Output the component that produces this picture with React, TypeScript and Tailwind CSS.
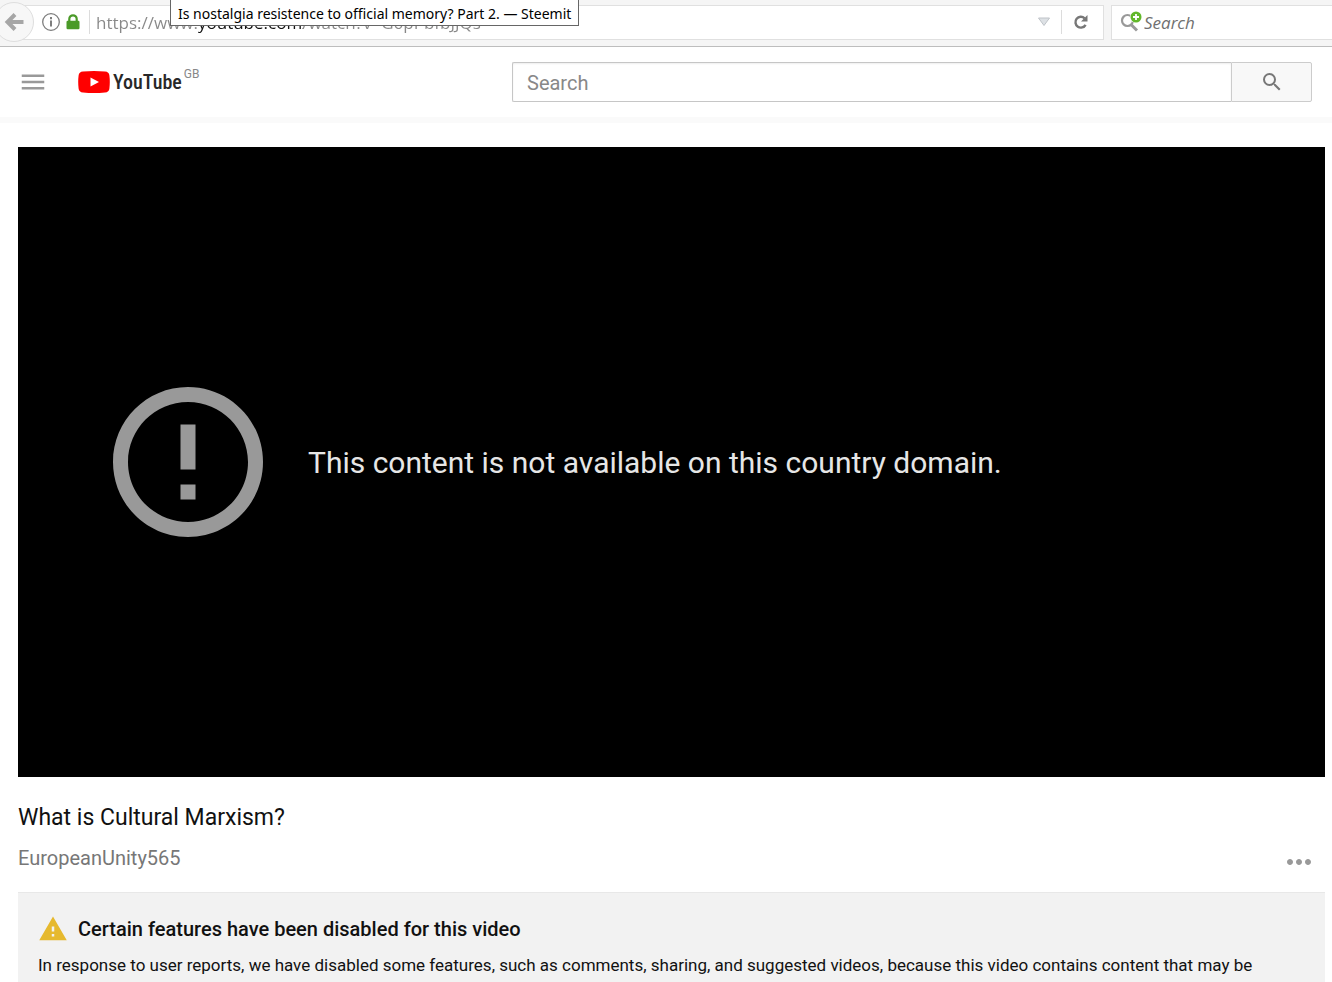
import { MdErrorOutline, MdMenu, MdMoreHoriz, MdSearch, MdWarning } from "react-icons/md";

function BackIcon() {
  return (
    <svg viewBox="0 0 20 20" className="h-5 w-5" fill="none" stroke="#a6a6a6" strokeWidth="4">
      <path d="M19.500 10H4" />
      <path d="M11 2.500 3.500 10l7.500 7.500" />
    </svg>
  );
}

function InfoIcon() {
  return (
    <svg viewBox="0 0 18 18" className="h-[18px] w-[18px]" fill="none" stroke="#7d7d7d">
      <circle cx="9" cy="9" r="8.300" strokeWidth="1.300" />
      <path d="M9 4v2.200M9 7.500V13.500" strokeWidth="2" />
    </svg>
  );
}

function LockIcon() {
  return (
    <svg viewBox="0 0 14 16" className="h-4 w-[14px]">
      <path d="M3.300 8V5a3.700 3.700 0 0 1 7.400 0v3" fill="none" stroke="#4a9a28" strokeWidth="2.200" />
      <rect x="0.500" y="6.800" width="13" height="8.400" rx="1.200" fill="#4a9a28" />
    </svg>
  );
}

function ReloadIcon() {
  return (
    <svg viewBox="0 0 16 16" className="h-4 w-4">
      <path d="M12.600 10.800A5.400 5.400 0 1 1 11.600 4.300" fill="none" stroke="#777" strokeWidth="2.400" />
      <path d="M14.500 1v6.500H8z" fill="#777" />
    </svg>
  );
}

function SearchEngineIcon() {
  return (
    <svg viewBox="0 0 24 22" className="h-[22px] w-6">
      <circle cx="7.500" cy="9.500" r="5.500" fill="none" stroke="#999" strokeWidth="2.200" />
      <path d="M11 13.500l6 6" stroke="#999" strokeWidth="3" />
      <circle cx="16" cy="6" r="6" fill="#fff" />
      <circle cx="16" cy="6" r="5.500" fill="#62b82a" />
      <path d="M16 3v6M13 6h6" stroke="#fff" strokeWidth="1.800" />
    </svg>
  );
}

function BrowserBar() {
  return (
    <div className="relative flex h-[47px] items-center border-b border-[#bdbdbd] bg-[#f5f5f5] pb-[2px] font-['Open_Sans',sans-serif]">
      <button
        aria-label="Back"
        className="z-10 -ml-[6px] flex h-10 w-10 shrink-0 items-center justify-center rounded-full border border-[#dedede] bg-[#f7f7f7]"
      >
        <BackIcon />
      </button>

      <div className="-ml-5 flex h-[35px] flex-1 items-center border border-[#e0e0e0] bg-white pl-[27px]">
        <InfoIcon />
        <span className="ml-[6px]">
          <LockIcon />
        </span>
        <span className="ml-[9px] h-6 w-px bg-[#dcdcdc]" />
        {/* the domain part of the address is darker than the rest */}
        <input
          aria-label="Address"
          type="text"
          defaultValue="https://www.youtube.com/watch?v=G6pPbfbJJQs"
          className="ml-[6px] h-8 min-w-0 flex-1 bg-[linear-gradient(90deg,#888_0_101px,#111_101px_207px,#888_207px)] bg-clip-text text-[17px] text-transparent outline-none"
        />
        <button aria-label="Show history" className="mr-[10px]">
          <svg viewBox="0 0 14 10" className="h-[10px] w-[14px]">
            <path d="M1.500 1h11L7 8.500z" fill="#dde1e5" stroke="#bfc3c8" />
          </svg>
        </button>
        <span className="h-6 w-px bg-[#dcdcdc]" />
        <button aria-label="Reload" className="flex w-[41px] justify-center pr-1">
          <ReloadIcon />
        </button>
      </div>

      <label className="ml-[7px] flex h-[35px] w-[221px] items-center border border-r-0 border-[#e0e0e0] bg-white pl-[8px]">
        <SearchEngineIcon />
        <input
          aria-label="Search the web"
          type="text"
          placeholder="Search"
          className="h-8 min-w-0 flex-1 text-[17px] italic outline-none placeholder:text-[#707070]"
        />
      </label>

      <div
        role="tooltip"
        className="absolute -top-px left-[170px] z-20 h-[27px] border border-[#666] bg-white px-[7px] font-['Noto_Sans',sans-serif] text-sm leading-[27px] whitespace-nowrap text-black"
      >
        Is nostalgia resistence to official memory? Part 2. — Steemit
      </div>
    </div>
  );
}

function Masthead() {
  return (
    <header className="flex h-[76px] items-center border-b-[6px] border-[#fafafa] pr-5 pl-[18px]">
      <button aria-label="Guide" className="text-[#999]">
        <MdMenu className="h-[30px] w-[30px]" />
      </button>
      <a href="/" className="ml-[30px] flex items-center">
        <svg viewBox="0 0 32 22" className="h-[22px] w-8">
          <path
            d="M5 .6Q16-.4 27 .6q4 .3 4.400 4 .8 6.400 0 12.800-.4 3.700-4.400 4-11 1-22 0-4-.3-4.400-4-.8-6.400 0-12.800Q1 .9 5 .6z"
            fill="#f00"
          />
          <path d="M12.500 6.500v9l8.500-4.500z" fill="#fff" />
        </svg>
        <span className="ml-[3px] font-['Roboto_Condensed','Liberation_Sans_Narrow',sans-serif] text-xl leading-6 font-medium text-[#282828]">
          YouTube
        </span>
        <span className="mb-4 ml-[2px] text-xs leading-4 text-[#888]">GB</span>
      </a>
      <form className="ml-auto flex h-10 w-[800px] max-w-[62%]" onSubmit={(e) => e.preventDefault()}>
        <input
          aria-label="Search"
          type="text"
          placeholder="Search"
          className="min-w-0 flex-1 rounded-l-[2px] border border-r-0 border-[#c6c6c6] px-[14px] pt-[2px] text-xl shadow-[inset_0_1px_2px_#eee] outline-none placeholder:text-[#888]"
        />
        <button
          aria-label="Submit search"
          className="flex w-[81px] items-center justify-center rounded-r-[2px] border border-[#ccc] bg-[#f8f8f8] text-[#777]"
        >
          <MdSearch className="h-6 w-6" />
        </button>
      </form>
    </header>
  );
}

function Player() {
  return (
    <div className="flex aspect-[1307/630] items-center bg-black pl-20">
      <MdErrorOutline className="h-[180px] w-[180px] shrink-0 text-[#999]" />
      <p className="ml-[30px] pt-[2px] text-[30px] leading-9 text-[#e6e6e6]">
        This content is not available on this country domain.
      </p>
    </div>
  );
}

export default function App() {
  return (
    <div className="flex min-h-screen flex-col bg-white font-[Roboto,sans-serif] text-[#111]">
      <BrowserBar />
      <Masthead />
      <main className="flex flex-1 flex-col pt-6 pr-[7px] pl-[18px]">
        <Player />
        <h1 className="mt-[25px] text-[23px] leading-8">What is Cultural Marxism?</h1>
        <div className="mt-[2px] flex items-center justify-between">
          <a href="/channel" className="text-xl leading-9 text-[#777]">
            EuropeanUnity565
          </a>
          <button aria-label="More actions" className="mt-2 mr-2 text-[#999]">
            <MdMoreHoriz className="h-9 w-9" />
          </button>
        </div>
        <section className="mt-3 flex-1 border-t border-[#e8e8e8] bg-[#f2f2f2] px-5 pt-5">
          <h2 className="flex items-center text-xl leading-8 font-medium">
            <MdWarning className="mr-[10px] h-[30px] w-[30px] text-[#e6b92e]" />
            Certain features have been disabled for this video
          </h2>
          <p className="mt-2 text-[17px] leading-6">
            In response to user reports, we have disabled some features, such as comments, sharing, and suggested
            videos, because this video contains content that may be
          </p>
        </section>
      </main>
    </div>
  );
}
